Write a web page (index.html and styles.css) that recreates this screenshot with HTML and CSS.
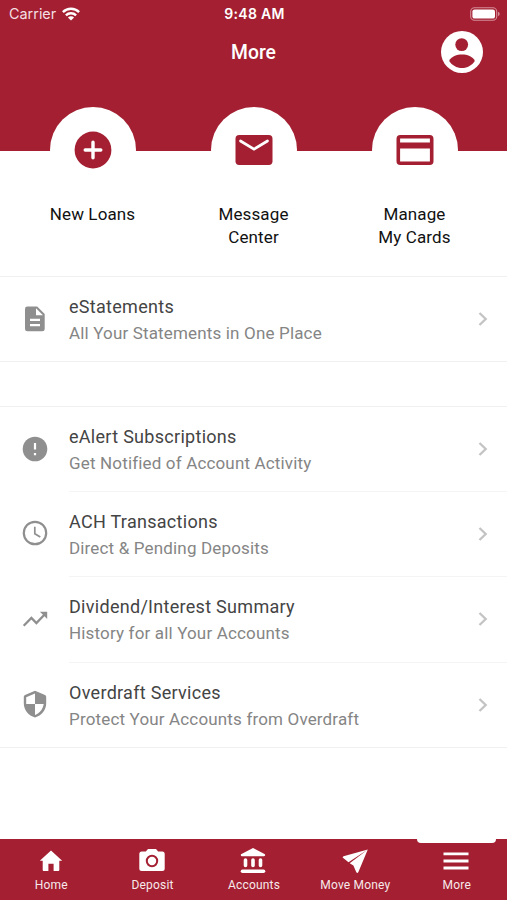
FILE: index.html
```html
<!DOCTYPE html>
<html lang="en">
<head>
<meta charset="utf-8">
<title>More</title>
<link rel="stylesheet" href="styles.css">
</head>
<body>
<div class="screen">
  <header class="header">
    <div class="status">
      <div class="carrier"><span>Carrier</span>
        <svg class="wifi" viewBox="0 0 18 14"><g fill="none" stroke="#fff" stroke-width="2.4"><path d="M.9 5.1a11.5 11.5 0 0 1 16.2 0"/><path d="M3.9 8.3a7.2 7.2 0 0 1 10.2 0"/></g><path fill="#fff" d="M5.900 10.500a4.400 4.400 0 0 1 6.200 0L9 13.600z"/></svg>
      </div>
      <div class="time">9:48 AM</div>
      <svg class="battery" viewBox="0 0 30 14"><rect x=".7" y=".7" width="26" height="12.600" rx="3.800" fill="none" stroke="#d48e98" stroke-width="1.100"/><rect x="2.400" y="2.400" width="22.600" height="9.200" rx="2.200" fill="#fff"/><path d="M28 4.800q1.700.6 1.700 2.200T28 9.200z" fill="#d48e98"/></svg>
    </div>
    <div class="titlebar">
      <h1>More</h1>
      <svg class="profile" viewBox="0 0 42 42"><circle cx="21" cy="21" r="21" fill="#fff"/><circle cx="20.700" cy="13.600" r="6.400" fill="#a31f31"/><path d="M8.200 30C10 25.500 16 23.600 21 23.600S32 25.500 33.800 30C31 34.300 26.500 37 21 37S11 34.300 8.200 30z" fill="#a31f31"/></svg>
    </div>
  </header>
  <nav class="actions">
    <a class="action"><span class="disc"><svg viewBox="0 0 44 44"><circle cx="22" cy="22" r="18.400" fill="#a31f31"/><path d="M22 14.200v15.600M14.200 22h15.600" stroke="#fff" stroke-width="3.400" stroke-linecap="round"/></svg></span><span class="label">New Loans</span></a>
    <a class="action"><span class="disc"><svg viewBox="0 0 44 44"><rect x="3.500" y="7" width="37" height="30" rx="3.700" fill="#a31f31"/><path d="M8.500 13L22 21.200 35.500 13" fill="none" stroke="#fff" stroke-width="2.700" stroke-linecap="round"/></svg></span><span class="label">Message<br>Center</span></a>
    <a class="action"><span class="disc"><svg viewBox="0 0 44 44"><rect x="5.300" y="8.800" width="33.400" height="26.400" rx="2" fill="none" stroke="#a31f31" stroke-width="3.600"/><path d="M5 17.500h34" stroke="#a31f31" stroke-width="6"/></svg></span><span class="label">Manage<br>My Cards</span></a>
  </nav>
  <main>
    <section class="group">
      <a class="row">
        <svg class="icon" viewBox="0 0 26 26"><path fill="#8f8f8f" fill-rule="evenodd" d="M5.400.5h9.800l7.500 7.500v14.900a2.400 2.400 0 0 1-2.400 2.400H5.400A2.400 2.400 0 0 1 3 22.900v-20A2.400 2.400 0 0 1 5.400.5zM14 2.300v7h7zM8 12.800v2.300h10v-2.300zm0 5.100v2.300h10v-2.300z"/></svg>
        <span class="body"><span class="copy"><span class="name">eStatements</span><span class="sub">All Your Statements in One Place</span></span><svg class="chev" viewBox="0 0 10 16"><path d="M1.500 2L7.700 8l-6.200 6"/></svg></span>
      </a>
    </section>
    <section class="group">
      <a class="row">
        <svg class="icon" viewBox="0 0 26 26"><circle cx="13" cy="13" r="12.300" fill="#8f8f8f"/><path d="M13 7v6.500M13 16.900v2.400" stroke="#fff" stroke-width="2.200"/></svg>
        <span class="body"><span class="copy"><span class="name">eAlert Subscriptions</span><span class="sub">Get Notified of Account Activity</span></span><svg class="chev" viewBox="0 0 10 16"><path d="M1.500 2L7.700 8l-6.200 6"/></svg></span>
      </a>
      <a class="row">
        <svg class="icon" viewBox="0 0 26 26"><g fill="none" stroke="#8f8f8f"><circle cx="13" cy="13" r="11.200" stroke-width="2.200"/><path d="M12.800 6.800v6.900l5.500 3.300" stroke-width="1.700"/></g></svg>
        <span class="body"><span class="copy"><span class="name">ACH Transactions</span><span class="sub">Direct &amp; Pending Deposits</span></span><svg class="chev" viewBox="0 0 10 16"><path d="M1.500 2L7.700 8l-6.200 6"/></svg></span>
      </a>
      <a class="row">
        <svg class="icon" viewBox="0 0 26 26"><path d="M1.700 19.700l7.700-7.700 5 5 8.700-9" fill="none" stroke="#8f8f8f" stroke-width="2.300"/><path fill="#8f8f8f" d="M17.900 5.700h7.300V13z"/></svg>
        <span class="body"><span class="copy"><span class="name">Dividend/Interest Summary</span><span class="sub">History for all Your Accounts</span></span><svg class="chev" viewBox="0 0 10 16"><path d="M1.500 2L7.700 8l-6.200 6"/></svg></span>
      </a>
      <a class="row">
        <svg class="icon" viewBox="0 0 26 26"><path fill="#8f8f8f" fill-rule="evenodd" d="M13-.2L23 4a2 2 0 0 1 1.200 1.800v6.700C24.200 18.800 19.500 24.600 13 26.500 6.500 24.600 1.800 18.800 1.800 12.500V5.800A2 2 0 0 1 3 4zm0 2.700L4.200 6.200V13H13zm0 10.500v11.100c4.800-1.700 8-6.300 8.700-11.100z"/></svg>
        <span class="body"><span class="copy"><span class="name">Overdraft Services</span><span class="sub">Protect Your Accounts from Overdraft</span></span><svg class="chev" viewBox="0 0 10 16"><path d="M1.500 2L7.700 8l-6.200 6"/></svg></span>
      </a>
    </section>
  </main>
  <nav class="tabs">
    <a class="tab"><svg viewBox="0 0 28 28"><path fill="#fff" d="M14 3.600l11.200 10.200h-2.900V23q0 1-1 1H16.600v-7.200h-5.200V24H6.700q-1 0-1-1v-9.200H2.800z"/></svg><span>Home</span></a>
    <a class="tab"><svg viewBox="0 0 28 28"><path fill="#fff" d="M10 1.900h8l2.200 2.500h4a2.500 2.500 0 0 1 2.500 2.500v14.500a2.500 2.500 0 0 1-2.500 2.500H3.800a2.500 2.500 0 0 1-2.500-2.500V6.900a2.500 2.500 0 0 1 2.500-2.500h4z"/><circle cx="14" cy="14" r="5.200" fill="none" stroke="#a31f31" stroke-width="2"/></svg><span>Deposit</span></a>
    <a class="tab"><svg viewBox="0 0 28 28"><path fill="#fff" d="M14 1l11.500 5.900q.7.400.7 1.100T25 9.200H3Q1.800 9.200 1.800 8t.7-1.100z"/><path d="M6.500 13v5.400M14 13v5.400M21.500 13v5.400" stroke="#fff" stroke-width="3.600" stroke-linecap="round"/><path d="M3.500 24.200h21" stroke="#fff" stroke-width="3.600" stroke-linecap="round"/></svg><span>Accounts</span></a>
    <a class="tab"><svg viewBox="0 0 28 28"><path fill="#fff" d="M26.800 2.400L2.500 9.200q-1.700.8-.3 1.900l5.300 4.200zM26.800 2.400L8.700 16.300l3.700 2.200 2.800 6.600q1.100 1.800 2.200 0z"/></svg><span>Move Money</span></a>
    <a class="tab active"><svg viewBox="0 0 28 28"><path d="M1.500 6.900h25M1.500 14h25M1.500 21h25" stroke="#fff" stroke-width="2.900"/></svg><span>More</span></a>
  </nav>
</div>
</body>
</html>
```
FILE: styles.css
```css
* { box-sizing: border-box; }
body { margin: 0; font-family: Roboto, "Liberation Sans", sans-serif; background: #fff; }
svg { display: block; flex: none; overflow: visible; }
.screen { width: 507px; height: 900px; display: flex; flex-direction: column; overflow: hidden; }
.header { height: 151px; flex: none; background: #a31f31; color: #fff; }
.status { height: 27px; padding: 0 7px 0 9px; display: grid; grid-template-columns: 1fr auto 1fr; align-items: center; font-family: Inter, sans-serif; font-size: 14.400px; }
.carrier { display: flex; align-items: center; gap: 6px; color: #f4dfe2; }
.wifi { width: 18px; height: 14px; }
.time { font-weight: 600; font-size: 14px; letter-spacing: .3px; }
.battery { width: 30px; height: 14px; justify-self: end; }
.titlebar { height: 50px; padding: 0 24px; display: grid; grid-template-columns: 1fr auto 1fr; align-items: center; }
h1 { grid-column: 2; margin: 0; padding-top: 2px; font-size: 19.300px; font-weight: 500; line-height: 24px; }
.profile { width: 42px; height: 42px; justify-self: end; }
.actions { display: grid; grid-template-columns: repeat(3, 1fr); height: 169px; margin-top: -44px; padding: 0 12px; flex: none; }
.action { display: flex; flex-direction: column; align-items: center; }
.disc { width: 86px; height: 86px; border-radius: 50%; background: #fff; display: flex; align-items: center; justify-content: center; }
.disc svg { width: 44px; height: 44px; }
.label { margin-top: 10px; font-size: 17px; line-height: 22.500px; letter-spacing: .12px; text-align: center; color: #111; }
.group { border-top: 1px solid #f0f0f0; border-bottom: 1px solid #f0f0f0; }
.group + .group { margin-top: 44px; }
.row { height: 85.500px; display: flex; align-items: center; padding-left: 22px; }
.group:first-child .row { height: 84px; }
.group + .group .row:first-child { height: 83.500px; }
.icon { width: 26px; height: 26px; margin-right: 21px; }
.body { flex: 1; height: 100%; display: flex; align-items: center; justify-content: space-between; padding-right: 19px; }
.row + .row .body { border-top: 1px solid #f4f4f4; }
.copy { display: flex; flex-direction: column; white-space: nowrap; padding-top: 2px; }
.name { font-size: 18px; line-height: 26px; letter-spacing: .29px; color: #444; }
.sub { font-size: 17px; line-height: 26px; letter-spacing: .16px; color: #858585; }
.chev { width: 10px; height: 16px; fill: none; stroke: #c3c3c3; stroke-width: 2.300; }
.tabs { height: 61px; margin-top: auto; flex: none; background: #a31f31; display: grid; grid-template-columns: repeat(5, 1fr); color: #f7e9eb; }
.tab { display: flex; flex-direction: column; align-items: center; padding: 8px 0 0; font-size: 12px; line-height: 14px; letter-spacing: .2px; position: relative; }
.tab svg { width: 28px; height: 28px; }
.tab span { margin-top: 3px; padding-left: 1px; }
.active::before { content: ""; position: absolute; top: 0; left: 11px; width: 79px; height: 4px; background: #fff; border-radius: 0 0 4px 4px; }
```
